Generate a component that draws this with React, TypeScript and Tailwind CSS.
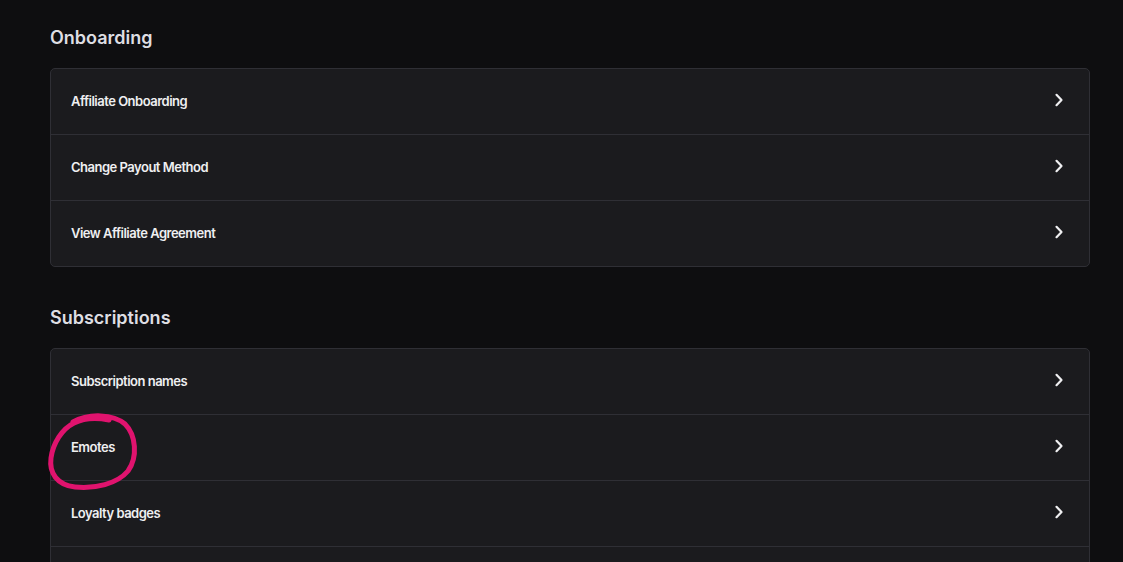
const sections = [
  {
    title: "Onboarding",
    items: ["Affiliate Onboarding", "Change Payout Method", "View Affiliate Agreement"],
  },
  {
    title: "Subscriptions",
    items: ["Subscription names", "Emotes", "Loyalty badges", "Subscriber streams"],
  },
];

function Chevron() {
  return (
    <svg width="10" height="14" viewBox="0 0 10 14" fill="none" className="mb-[4px] shrink-0">
      <path d="M2.5 1.8 L7.5 7 L2.5 12.2" stroke="#efeff1" strokeWidth="2.2" strokeLinecap="round" strokeLinejoin="round" />
    </svg>
  );
}

function Scribble() {
  // hand-drawn highlight round "Emotes"
  return (
    <svg
      width="110"
      height="90"
      viewBox="0 0 110 90"
      className="pointer-events-none absolute left-[-14px] top-[-6px] z-10"
      fill="none"
    >
      <path
        d="M36 13 C52 4 76 5 88 15 C99 26 101 48 91 62 C80 75 58 80 38 78 C20 76 12 64 14 49 C16 34 25 20 37 14 C49 8 62 9 72 11"
        stroke="#e0136e"
        strokeWidth="5"
        strokeLinecap="round"
        strokeLinejoin="round"
      />
    </svg>
  );
}

export default function App() {
  return (
    <div className="h-[562px] w-full overflow-hidden bg-[#0e0e10] px-[50px] pt-[26px] font-['Inter',sans-serif] text-[#efeff1]">
      {sections.map((section, si) => (
        <section key={section.title} className={si > 0 ? "mt-[39px]" : ""}>
          <h2 className="mb-[18px] text-[18px] font-semibold leading-[24px] text-[#dedee3]">
            {section.title}
          </h2>
          <div className="w-[1040px] rounded-[5px] border border-[#2f2f35] bg-[#1b1b1e]">
            {section.items.map((item, i) => (
              <div
                key={item}
                className={`relative box-content flex h-[65px] items-center justify-between pl-[20px] pr-[25px] ${
                  i > 0 ? "border-t border-[#2f2f35]" : ""
                }`}
              >
                <span className="text-[13px] font-semibold tracking-[-0.5px] text-[#efeff1]">{item}</span>
                <Chevron />
                {item === "Emotes" && <Scribble />}
              </div>
            ))}
          </div>
        </section>
      ))}
    </div>
  );
}
